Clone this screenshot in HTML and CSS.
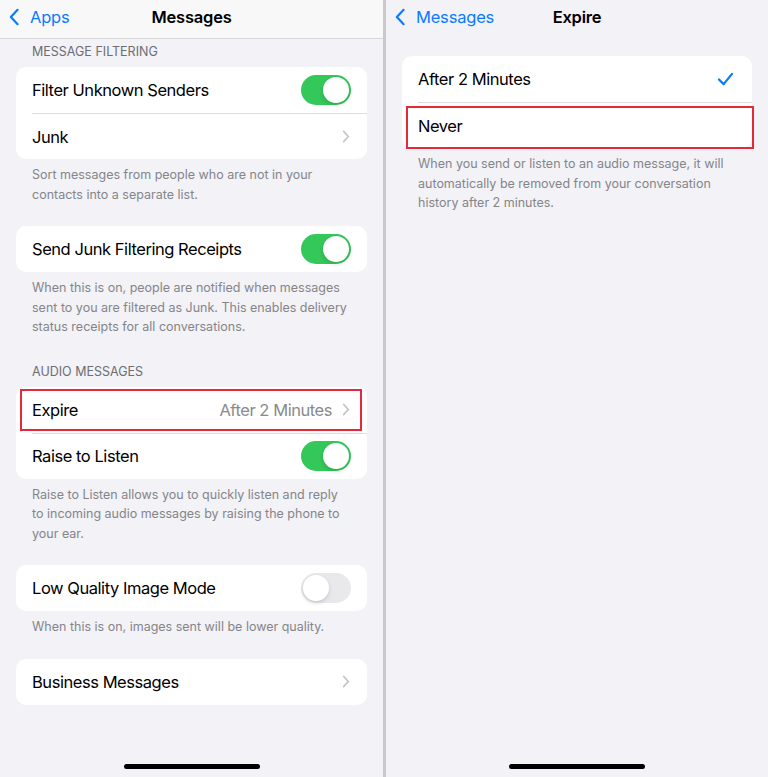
FILE: index.html
```html
<!DOCTYPE html>
<html>
    <head>
        <title>Messages Settings</title>
        <meta charset="UTF-8">
        <meta name="viewport" content="width=device-width, initial-scale=1.0">
        <link rel="stylesheet" href="styles.css">
    </head>
    <body>
        <div class="screen">
            <!-- Settings > Messages -->
            <section class="panel panel-left">
                <header class="navbar navbar-bar">
                    <span class="back">
                        <svg class="back-icon" viewBox="0 0 12 20"><path d="M10 2 L2.5 10 L10 18"/></svg>Apps
                    </span>
                    <h1 class="title">Messages</h1>
                    <span></span>
                </header>

                <div class="group-header">Message Filtering</div>
                <div class="card">
                    <div class="row">
                        <span class="label">Filter Unknown Senders</span>
                        <span class="toggle on"></span>
                    </div>
                    <div class="row">
                        <span class="label">Junk</span>
                        <svg class="chevron" viewBox="0 0 8 14"><path d="M1.5 1.5 L6.5 7 L1.5 12.5"/></svg>
                    </div>
                </div>
                <p class="group-footer">Sort messages from people who are not in your contacts into a separate list.</p>

                <div class="card">
                    <div class="row">
                        <span class="label">Send Junk Filtering Receipts</span>
                        <span class="toggle on"></span>
                    </div>
                </div>
                <p class="group-footer">When this is on, people are notified when messages sent to you are filtered as Junk. This enables delivery status receipts for all conversations.</p>

                <div class="group-header">Audio Messages</div>
                <div class="card">
                    <div class="row marked marked-left">
                        <span class="label">Expire</span>
                        <span class="value">After 2 Minutes</span>
                        <svg class="chevron" viewBox="0 0 8 14"><path d="M1.5 1.5 L6.5 7 L1.5 12.5"/></svg>
                    </div>
                    <div class="row">
                        <span class="label">Raise to Listen</span>
                        <span class="toggle on"></span>
                    </div>
                </div>
                <p class="group-footer">Raise to Listen allows you to quickly listen and reply to incoming audio messages by raising the phone to your ear.</p>

                <div class="card">
                    <div class="row">
                        <span class="label">Low Quality Image Mode</span>
                        <span class="toggle"></span>
                    </div>
                </div>
                <p class="group-footer">When this is on, images sent will be lower quality.</p>

                <div class="card">
                    <div class="row">
                        <span class="label">Business Messages</span>
                        <svg class="chevron" viewBox="0 0 8 14"><path d="M1.5 1.5 L6.5 7 L1.5 12.5"/></svg>
                    </div>
                </div>

                <div class="home-bar"></div>
            </section>

            <div class="divider"></div>

            <!-- Messages > Expire -->
            <section class="panel panel-right">
                <header class="navbar">
                    <span class="back">
                        <svg class="back-icon" viewBox="0 0 12 20"><path d="M10 2 L2.5 10 L10 18"/></svg>Messages
                    </span>
                    <h1 class="title">Expire</h1>
                    <span></span>
                </header>

                <div class="card card-top">
                    <div class="row">
                        <span class="label">After 2 Minutes</span>
                        <svg class="check" viewBox="0 0 18 15"><path d="M2 8 L7 13 L16 2"/></svg>
                    </div>
                    <div class="row marked marked-right">
                        <span class="label">Never</span>
                    </div>
                </div>
                <p class="group-footer">When you send or listen to an audio message, it will automatically be removed from your conversation history after 2 minutes.</p>

                <div class="home-bar"></div>
            </section>
        </div>
    </body>
</html>
```

FILE: styles.css
```css
* {
    box-sizing: border-box;
}
body {
    margin: 0;
    background-color: #f2f2f7;
    font-family: "Inter", "Noto Sans", sans-serif;
    color: #000;
}
.screen {
    display: flex;
    width: 768px;
    height: 777px;
    overflow: hidden;
}
.panel {
    display: flex;
    flex-direction: column;
    height: 777px;
    background-color: #f2f2f7;
}
.panel-left {
    width: 383px;
}
.panel-right {
    width: 382px;
}
.divider {
    width: 3px;
    background-color: #c9c9cb;
}

/* navigation bar */
.navbar {
    display: grid;
    grid-template-columns: 1fr auto 1fr;
    align-items: center;
    height: 39px;
    padding: 0 8px 4px;
    border-bottom: 1px solid transparent;
}
.navbar-bar {
    background-color: #f8f8f8;
    border-bottom-color: #d6d6d8;
}
.back {
    display: flex;
    align-items: center;
    color: #0a7aff;
    font-size: 16.5px;
    letter-spacing: -0.2px;
}
.back-icon {
    width: 12px;
    height: 18px;
    margin-right: 10px;
    fill: none;
    stroke: #0a7aff;
    stroke-width: 2.4;
    stroke-linecap: round;
    stroke-linejoin: round;
}
.title {
    margin: 0;
    font-size: 16.5px;
    font-weight: 600;
    letter-spacing: -0.2px;
}

/* grouped list */
.group-header {
    padding: 5px 16px 7px 32px;
    font-size: 12.5px;
    line-height: 16px;
    color: #6d6d72;
    text-transform: uppercase;
}
.card {
    margin: 0 16px;
    background-color: #fff;
    border-radius: 10px;
}
.card-top {
    margin-top: 17px;
}
.row {
    display: flex;
    align-items: center;
    height: 46px;
    margin-left: 16px;
    padding-right: 16px;
    font-size: 16.5px;
    letter-spacing: -0.45px;
}
.row + .row {
    border-top: 1px solid #dcdcde;
}
.label {
    flex: 1;
}
.value {
    color: #8a8a8e;
    margin-right: 10px;
}
.chevron {
    width: 8px;
    height: 13px;
    margin-right: 1px;
    fill: none;
    stroke: #c4c4c7;
    stroke-width: 1.8;
    stroke-linecap: round;
    stroke-linejoin: round;
}
.check {
    width: 17px;
    height: 14px;
    margin-right: 2px;
    fill: none;
    stroke: #0a7aff;
    stroke-width: 2.4;
    stroke-linecap: round;
    stroke-linejoin: round;
}
.group-footer {
    margin: 0 0 22px;
    padding: 6px 32px 0;
    font-size: 12.5px;
    line-height: 19.5px;
    color: #858589;
}

/* switches */
.toggle {
    position: relative;
    width: 50px;
    height: 30px;
    border-radius: 15px;
    background-color: #e9e9eb;
}
.toggle::after {
    content: "";
    position: absolute;
    top: 2px;
    left: 2px;
    width: 26px;
    height: 26px;
    border-radius: 50%;
    background-color: #fff;
    box-shadow: 0 2px 4px rgba(0, 0, 0, 0.15);
}
.toggle.on {
    background-color: #34c759;
}
.toggle.on::after {
    left: 22px;
}

/* red highlight frames */
.marked {
    position: relative;
}
.marked::after {
    content: "";
    position: absolute;
    border: 2px solid #e5283a;
}
.marked-left::after {
    top: 2px;
    bottom: 2px;
    left: -12px;
    right: 5px;
}
.marked-right::after {
    top: 3px;
    bottom: -1px;
    left: -12px;
    right: -2px;
}

.home-bar {
    width: 136px;
    height: 5px;
    margin: auto auto 8px;
    border-radius: 3px;
    background-color: #000;
}
```
